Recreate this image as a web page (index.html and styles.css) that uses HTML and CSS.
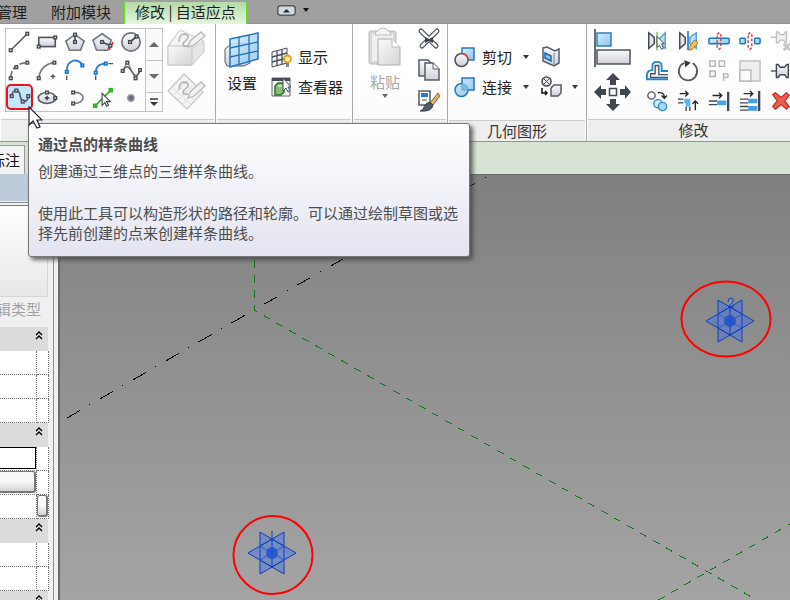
FILE: index.html
```html
<!DOCTYPE html>
<html lang="zh-CN">
<head>
<meta charset="utf-8">
<title>修改 | 自适应点</title>
<link rel="stylesheet" href="styles.css">
</head>
<body>
<svg class="defs" width="0" height="0" aria-hidden="true">
  <defs>
    <linearGradient id="steel" x1="0" y1="0" x2="0" y2="1"><stop offset="0" stop-color="#fafafc"/><stop offset="1" stop-color="#ced1d9"/></linearGradient>
    <linearGradient id="sky" x1="0" y1="0" x2="1" y2="1"><stop offset="0" stop-color="#d6edfb"/><stop offset="1" stop-color="#8cc6ec"/></linearGradient>
    <linearGradient id="pale" x1="0" y1="0" x2="1" y2="1"><stop offset="0" stop-color="#fbfbfb"/><stop offset="1" stop-color="#d4d4d4"/></linearGradient>
    <g id="n"><rect x="-1.5" y="-1.5" width="3" height="3" fill="#e8eaee" stroke="#444a54" stroke-width="1.5"/></g>
    <g id="nb"><rect x="-1.5" y="-1.5" width="3" height="3" fill="#8cc6f2" stroke="#1473c5" stroke-width="1.5"/></g>
    <g id="star">
      <path d="M-12-21L12-8V21L-12 8Z M12-21L-12-8V21L12 8Z M-24 0L0-14L24 0L0 14Z" fill="#3b6ef0" fill-opacity=".42" fill-rule="nonzero" stroke="none"/>
      <path d="M-12-21L12-7M12-21L-12-7M-12-21V21M12-21V21M-12 21L12 7M12 21L-12 7M-24 0L0-14L24 0L0 14Z" fill="none" stroke="#0b3fc0"/>
      <path d="M0-14V14" stroke="#0b3fc0"/>
      <path d="M-12-7L12 7M12-7L-12 7" stroke="#2a5cd4" stroke-opacity=".6" stroke-width="1.5"/>
      <circle r="6" fill="#1c50cf" fill-opacity=".8"/>
    </g>
    <g id="chev"><path d="M1 4L4 1L7 4M1 8L4 5L7 8" fill="none" stroke="#000" stroke-width="1.4"/></g>
  </defs>
</svg>
<div class="app">
  <nav class="tabs">
    <a class="tab" href="#">管理</a>
    <a class="tab" href="#">附加模块</a>
    <a class="tab active" href="#">修改 | 自适应点</a>
    <button class="collapse" aria-label="最小化"><svg width="19" height="11" viewBox="0 0 19 11"><rect x=".75" y=".75" width="17.500" height="9.500" rx="3" fill="#d6d8dd" stroke="#555a65" stroke-width="1.500"/><path d="M6 7.500L9.500 4L13 7.500Z" fill="#222833"/></svg></button>
    <button class="collapse" aria-label="更多"><svg width="8" height="5" viewBox="0 0 8 5"><path d="M1 0H7L4 4Z" fill="#111"/></svg></button>
  </nav>

  <div class="ribbon">
    <section class="panel draw">
      <div class="body">
        <div class="gallery">
          <div class="shapes">
            <button aria-label="直线"><svg viewBox="0 0 24 24"><path d="M3 21L21 3" stroke="#50555d" stroke-width="1.5"/><use href="#n" x="3" y="21"/><use href="#n" x="21" y="3"/></svg></button>
            <button aria-label="矩形"><svg viewBox="0 0 24 24"><rect x="3" y="7" width="18" height="10" fill="url(#steel)" stroke="#50555d" stroke-width="1.800"/><use href="#n" x="3" y="17"/><use href="#n" x="21" y="7"/></svg></button>
            <button aria-label="内接多边形"><svg viewBox="0 0 24 24"><path d="M12 4L22 11L18 21H6L2 11Z" fill="url(#steel)" stroke="#747982" stroke-width="1.800"/><path d="M12 4V12" stroke="#444a54" stroke-width="1.800"/><use href="#n" x="12" y="4"/><use href="#n" x="12" y="12"/></svg></button>
            <button aria-label="外接多边形"><svg viewBox="0 0 24 24"><path d="M11 3L21 10L17 21H5L1 10Z" fill="url(#steel)" stroke="#747982" stroke-width="1.800"/><path d="M23 12L18 22" stroke="#e22" stroke-width="1.800" stroke-dasharray="4 2"/><path d="M11 12L20 16" stroke="#444a54" stroke-width="1.800"/><use href="#n" x="11" y="12"/><use href="#n" x="20" y="16"/></svg></button>
            <button aria-label="圆形"><svg viewBox="0 0 24 24"><circle cx="12" cy="12" r="10" fill="url(#steel)" stroke="#6a6f78" stroke-width="1.800"/><path d="M11 12L18 6" stroke="#444a54" stroke-width="1.800"/><use href="#n" x="11" y="12"/><use href="#n" x="18" y="6"/></svg></button>
            <button aria-label="起点-终点-半径弧"><svg viewBox="0 0 24 24"><path d="M3 20Q4 5 21 4" fill="none" stroke="#747982" stroke-width="1.800" stroke-dasharray="7 2"/><use href="#n" x="3" y="21"/><use href="#n" x="9" y="9"/><use href="#n" x="21" y="4"/></svg></button>
            <button aria-label="圆心-端点弧"><svg viewBox="0 0 24 24"><path d="M3 21Q5 6 20 4" fill="none" stroke="#747982" stroke-width="1.800"/><use href="#n" x="3" y="21"/><use href="#n" x="20" y="4"/><path d="M16 19H21M18.500 16.500V21.500" stroke="#444a54" stroke-width="1.500"/></svg></button>
            <button aria-label="相切-端点弧"><svg viewBox="0 0 24 24"><path d="M3 23V18" stroke="#555" stroke-width="1.500"/><path d="M3 14C3-1 17-1 20 7" fill="none" stroke="#2c7fd0" stroke-width="2"/><use href="#nb" x="3" y="14"/><use href="#nb" x="20" y="7"/></svg></button>
            <button aria-label="圆角弧"><svg viewBox="0 0 24 24"><path d="M4 23V18M18 5H23" stroke="#555" stroke-width="1.500"/><path d="M4 15Q4 5 15 5" fill="none" stroke="#2c7fd0" stroke-width="2"/><use href="#nb" x="4" y="15"/><use href="#nb" x="15" y="5"/></svg></button>
            <button aria-label="样条曲线"><svg viewBox="0 0 24 24"><path d="M3 13L8 3L17 22L22 12" fill="none" stroke="#8b9098" stroke-width="1.500"/><path d="M3 13Q7 5 11 11T17 18Q20 18 22 12" fill="none" stroke="#555b66" stroke-width="1.500"/><use href="#n" x="3" y="13"/><use href="#n" x="8" y="4"/><use href="#n" x="17" y="21"/><use href="#n" x="22" y="12"/></svg></button>
            <button class="picked" aria-label="通过点的样条曲线"><svg viewBox="0 0 24 24"><path d="M3 11C4 3 11 3 12 10S19 20 21 12" fill="none" stroke="#555b66" stroke-width="1.800"/><use href="#n" x="3" y="11"/><use href="#n" x="8" y="5"/><use href="#n" x="15" y="17"/><use href="#n" x="21" y="11"/></svg></button>
            <button aria-label="椭圆"><svg viewBox="0 0 24 24"><ellipse cx="12" cy="12" rx="9.500" ry="6" fill="url(#steel)" stroke="#555b66" stroke-width="1.800"/><path d="M12 9.500V14.500M9.500 12H14.500" stroke="#333" stroke-width="1.500"/><use href="#n" x="12" y="6"/><use href="#n" x="21" y="12"/></svg></button>
            <button aria-label="半椭圆"><svg viewBox="0 0 24 24"><path d="M11 6C24 5 24 18 11 18" fill="none" stroke="#747982" stroke-width="1.800"/><use href="#n" x="10" y="6"/><use href="#n" x="10" y="18"/></svg></button>
            <button aria-label="拾取线"><svg viewBox="0 0 24 24"><path d="M3 21L20 4" stroke="#2eae20" stroke-width="1.800"/><rect x="1" y="18" width="5" height="5" fill="#2eb821"/><rect x="18" y="1" width="5" height="5" fill="#2eb821"/><path d="M11 7V20L14 17L16 21L18 20L16 16H20Z" fill="#fff" stroke="#3d434d" stroke-width="1.200"/></svg></button>
            <button aria-label="点图元"><svg viewBox="0 0 24 24"><circle cx="12" cy="12" r="3.500" fill="#686e79" stroke="#9ca1aa" stroke-width="1.500"/></svg></button>
          </div>
          <div class="scroller">
            <button aria-label="上一行"><svg width="10" height="6" viewBox="0 0 10 6"><path d="M0 5L5 0L10 5Z" fill="#686c73"/></svg></button>
            <button aria-label="下一行"><svg width="10" height="6" viewBox="0 0 10 6"><path d="M0 0H10L5 5Z" fill="#686c73"/></svg></button>
            <button class="short" aria-label="展开"><svg width="10" height="9" viewBox="0 0 10 9"><path d="M1 1H9" stroke="#333" stroke-width="1.500"/><path d="M1 4H9L5 8Z" fill="#333"/></svg></button>
          </div>
        </div>
        <div class="stack modes">
          <button aria-label="在面上绘制" disabled><svg width="40" height="40" viewBox="0 0 40 40"><path d="M1 18L13 2L37 14V24L25 37H1Z" fill="#e6e6e6" stroke="#c6c6c6"/><path d="M1 18L13 2L37 13L25 20Z" fill="#f4f4f4" stroke="#cecece"/><path d="M1 18H25V37H1Z" fill="url(#pale)" stroke="#c6c6c6"/><path d="M12 14Q12 6 18 6Q25 8 17 14Q14 19 21 18" fill="none" stroke="#b2b2b2" stroke-width="1.500"/><path d="M21 19L23 13L34 4L38 8L27 17Z" fill="#f1f1f1" stroke="#b9b9b9" stroke-width="1.300"/></svg></button>
          <button aria-label="在工作平面上绘制" disabled><svg width="40" height="40" viewBox="0 0 40 40"><path d="M1 19L17 2L36 20L20 37Z" fill="#f4f4f4" stroke="#c9c9c9" stroke-width="1.300"/><path d="M5 15L24 33M9 11L28 29M13 7L32 24M6 24L22 7M11 28L27 12M15 33L31 16" stroke="#dfdfdf"/><path d="M12 18Q12 10 18 10Q25 12 17 18Q14 23 21 22" fill="none" stroke="#b2b2b2" stroke-width="1.500"/><path d="M21 26L23 20L34 10L38 14L27 24Z" fill="#f1f1f1" stroke="#b9b9b9" stroke-width="1.300"/></svg></button>
        </div>
      </div>
      <div class="title"></div>
    </section>

    <section class="panel plane">
      <div class="body">
        <button class="big"><svg width="36" height="37" viewBox="0 0 36 37"><path d="M1 18L7 13L26 12V32L20 35H3L1 31Z" fill="url(#steel)" stroke="#555b66"/><path d="M6 8L34 2V28L6 36Z" fill="url(#sky)" fill-opacity=".85" stroke="#2672bb" stroke-width="1.500"/><path d="M15 6V33M25 4V31M6 17L34 11M6 26L34 20" stroke="#2672bb" stroke-width="1.300"/></svg><span>设置</span></button>
        <div class="stack">
          <button class="wide"><svg width="21" height="21" viewBox="0 0 21 21"><path d="M1 5L16 1V16L1 20Z" fill="#f2f3f5" stroke="#4a4f58"/><path d="M6 4V19M11 3V18M1 10L16 6M1 15L16 11" stroke="#4a4f58" stroke-width="1.300"/><circle cx="16.500" cy="12" r="3.500" fill="#fff6b2" stroke="#f29516" stroke-width="1.800"/><path d="M15 16H18V20H15Z" fill="#858a94"/></svg><span>显示</span></button>
          <button class="wide"><svg width="21" height="21" viewBox="0 0 21 21"><path d="M1 1H19V19H1Z" fill="#f3f4f7" stroke="#626873"/><path d="M1 1H19V4H1Z" fill="#454b56"/><path d="M4 9L7 6H13V15L10 18H4Z" fill="#8fb978" stroke="#27732a" stroke-width="1.500"/><path d="M7 9H13" stroke="#fff"/><path d="M12 1V14L15 11L17 15L19 14L17 10H20Z" fill="#fff" stroke="#444b57"/></svg><span>查看器</span></button>
        </div>
      </div>
      <div class="title"></div>
    </section>

    <section class="panel clipboard">
      <div class="body">
        <button class="big" disabled><svg width="36" height="40" viewBox="0 0 36 40"><rect x="2" y="4" width="27" height="33" rx="2" fill="#d9d9d9" stroke="#b9b9b9"/><rect x="5" y="7" width="21" height="27" fill="#f0f0f0"/><path d="M8 8Q8 4 11 4Q12 1 16 1T21 4Q24 4 24 8Z" fill="#f5f5f5" stroke="#bdbdbd"/><path d="M11 12H25L33 20V38H11Z" fill="url(#pale)" stroke="#adadad"/><path d="M25 12V20H33" fill="#fff" stroke="#bdbdbd"/></svg><span>粘贴</span><svg class="drop" width="6" height="4" viewBox="0 0 6 4"><path d="M0 0H6L3 4Z" fill="#666"/></svg></button>
        <div class="stack icons">
          <button aria-label="剪切"><svg viewBox="0 0 24 24"><path d="M4 4L19 19M20 4L5 19" stroke="#4d525b" stroke-width="5" stroke-linecap="round"/><path d="M4 4L19 19M20 4L5 19" stroke="#fff" stroke-width="2.500" stroke-linecap="round"/><path d="M8 10L12 12L16 10V16L12 14L8 16Z" fill="#3d424c"/></svg></button>
          <button aria-label="复制"><svg viewBox="0 0 24 24"><path d="M2 2H11L14 5V18H2Z" fill="url(#steel)" stroke="#555b66" stroke-width="1.500"/><path d="M8 5H16L22 11V22H8Z" fill="url(#steel)" stroke="#555b66" stroke-width="1.500"/><path d="M16 5V11H22" fill="#fff" stroke="#555b66"/></svg></button>
          <button aria-label="匹配类型"><svg viewBox="0 0 24 24"><rect x="2" y="2" width="11" height="14" fill="#fff" stroke="#555b66" stroke-width="1.500"/><rect x="4" y="4" width="7" height="4" fill="#267bc8"/><path d="M5 11H10" stroke="#555"/><path d="M13 14L21 4L23 7L16 16Z" fill="#e6b66b" stroke="#80603a"/><path d="M3 22Q7 21 8 16Q12 11 16 16Q15 23 3 22Z" fill="#555b66" stroke="#3d424c"/></svg></button>
        </div>
      </div>
      <div class="title"></div>
    </section>

    <section class="panel geometry">
      <div class="body">
        <div class="stack">
          <button class="wide"><svg width="22" height="22" viewBox="0 0 22 22"><rect x="8" y="2" width="12" height="12" fill="url(#sky)" stroke="#2d7ab9" stroke-width="1.500"/><circle cx="7.500" cy="14" r="6.500" fill="url(#steel)" stroke="#50555f" stroke-width="1.500"/><path d="M8 7.500Q14 8 14 14" fill="none" stroke="#f13b3b" stroke-width="1.500"/></svg><span>剪切</span><svg class="drop" width="6" height="4" viewBox="0 0 6 4"><path d="M0 0H6L3 4Z" fill="#333"/></svg></button>
          <button class="wide"><svg width="22" height="22" viewBox="0 0 22 22"><path d="M8 2H20V14H14A6.500 6.500 0 1 1 8 7.500Z" fill="url(#sky)" stroke="#2477bd" stroke-width="1.500"/><path d="M8 8Q14 8 14 14H8Z" fill="#84bce3" stroke="#5ca4d7"/></svg><span>连接</span><svg class="drop" width="6" height="4" viewBox="0 0 6 4"><path d="M0 0H6L3 4Z" fill="#333"/></svg></button>
        </div>
        <div class="stack">
          <button class="mini" aria-label="填色"><svg width="22" height="22" viewBox="0 0 22 22"><path d="M2 2L6 1L14 5L18 3V17L13 20L2 15Z" fill="url(#steel)" stroke="#555b66" stroke-width="1.500"/><path d="M13 7V20" fill="none" stroke="#7d828c"/><path d="M4 7L10 10V15L4 12Z" fill="#8bc2ef" stroke="#1869b5" stroke-width="1.500"/></svg></button>
          <button class="mini" aria-label="拆分面"><svg width="22" height="22" viewBox="0 0 22 22"><circle cx="5.500" cy="5.500" r="4.500" fill="#eee" stroke="#444a54" stroke-width="1.500"/><path d="M3 3L8 8M8 3L3 8" stroke="#444a54"/><path d="M1 12V17H6M4 15L6 17L4 19" fill="none" stroke="#111" stroke-width="1.500"/><path d="M10 12L13 9H20V17L17 20H10Z" fill="url(#steel)" stroke="#555b66" stroke-width="1.500"/></svg><svg class="drop" width="6" height="4" viewBox="0 0 6 4"><path d="M0 0H6L3 4Z" fill="#333"/></svg></button>
        </div>
      </div>
      <div class="title">几何图形</div>
    </section>

    <section class="panel modify">
      <div class="body">
        <div class="stack large">
          <button aria-label="对齐"><svg width="40" height="40" viewBox="0 0 40 40"><path d="M4 1V39" stroke="#343b47" stroke-width="1.500"/><rect x="6" y="5" width="14" height="13" fill="url(#sky)" stroke="#3280b7" stroke-width="1.500"/><rect x="6" y="22" width="33" height="14" fill="url(#steel)" stroke="#4d535e" stroke-width="1.500"/></svg></button>
          <button aria-label="移动"><svg width="40" height="40" viewBox="0 0 40 40"><path d="M22 1L29 8H25V13H19V8H15ZM22 39L29 32H25V27H19V32H15ZM3 20L10 13V17H15V23H10V27ZM40 20L34 13V17H29V23H34V27Z" fill="#414751"/><rect x="18.500" y="16.500" width="7" height="7" fill="#fff" stroke="#444a54" stroke-width="1.500"/></svg></button>
        </div>
        <div class="tools">
          <button aria-label="镜像-拾取轴"><svg viewBox="0 0 24 24"><path d="M3 3L9 8V15L3 20Z" fill="#e3e5e9" stroke="#444a54" stroke-width="1.600"/><path d="M21 3L15 9V15L21 20Z" fill="#b9dff8" stroke="#4ca1de" stroke-width="1.500"/><path d="M12 2V22" stroke="#79b95b" stroke-width="1.500"/><path d="M12 7V19L15 17L17 21L19 20L17 15H20Z" fill="#fff" stroke="#353b46"/></svg></button>
          <button aria-label="镜像-绘制轴"><svg viewBox="0 0 24 24"><path d="M3 3L9 8V15L3 20Z" fill="#e3e5e9" stroke="#444a54" stroke-width="1.600"/><path d="M21 3L14 8V15L21 20Z" fill="#b9dff8" stroke="#4ca1de" stroke-width="1.500"/><path d="M12 1V22" stroke="#1780ce" stroke-width="1.800"/><path d="M13 19L19 11L23 14L17 21L13 22Z" fill="#f5bd59" stroke="#b36b1f"/></svg></button>
          <button aria-label="拆分图元"><svg viewBox="0 0 24 24"><rect x="1" y="9" width="22" height="6" rx="1" fill="url(#sky)" stroke="#1977bd" stroke-width="1.600"/><path d="M10 5L12 3L14 5V19L12 21L10 19Z" fill="none" stroke="#d63636" stroke-width="1.500" stroke-dasharray="3 2"/></svg></button>
          <button aria-label="用间隙拆分"><svg viewBox="0 0 24 24"><rect x="1" y="9" width="6" height="6" rx="1" fill="url(#sky)" stroke="#1977bd" stroke-width="1.600"/><rect x="17" y="9" width="6" height="6" rx="1" fill="url(#sky)" stroke="#1977bd" stroke-width="1.600"/><path d="M10 5L12 3L14 5V19L12 21L10 19Z" fill="none" stroke="#d63636" stroke-width="1.500" stroke-dasharray="3 2"/></svg></button>
          <button aria-label="解锁" disabled><svg viewBox="0 0 24 24"><path d="M1 8H7" stroke="#bebebe" stroke-width="1.500"/><path d="M7 2H9L11 5H15L17 2H18V14H17L15 11H11L9 14H7Z" fill="#f2f2f2" stroke="#bebebe" stroke-width="1.500"/><path d="M15 15L22 22M22 15L15 22" stroke="#c2c2c2" stroke-width="3"/></svg></button>
          <button aria-label="偏移"><svg viewBox="0 0 24 24"><path d="M24 12H17V6Q17 2 12 2Q7 2 7 6V11Q1 11 1 17V21H24" fill="none" stroke="#2783d4" stroke-width="2"/><path d="M24 16H14V6H10V15H5V19H24" fill="#f3f4f5" stroke="#4d525c" stroke-width="1.500"/></svg></button>
          <button aria-label="旋转"><svg viewBox="0 0 24 24"><path d="M8 3A10 10 0 1 0 17 3.500" fill="none" stroke="#545963" stroke-width="2"/><path d="M8 0L15 3L9 8Z" fill="#343a44"/></svg></button>
          <button aria-label="阵列" disabled><svg viewBox="0 0 24 24"><path d="M2 1H8V7H2ZM12 1H18V7H12ZM2 12H8V18H2Z" fill="#f6f6f6" stroke="#b4b4b4" stroke-width="1.500"/><path d="M17 23V15H21Q23 17 21 19H17" fill="none" stroke="#bdbdbd" stroke-width="1.800"/></svg></button>
          <button aria-label="缩放" disabled><svg viewBox="0 0 24 24"><rect x="1" y="1" width="22" height="22" fill="#eee" stroke="#bdbdbd" stroke-width="1.500"/><rect x="1" y="11" width="12" height="12" fill="#fafafa" stroke="#b7b7b7" stroke-width="1.500"/></svg></button>
          <button aria-label="锁定"><svg viewBox="0 0 24 24"><path d="M1 12H7" stroke="#444a54" stroke-width="1.500"/><path d="M7 5H9L11 8H16L18 5H20V19H18L16 16H11L9 19H7Z" fill="url(#steel)" stroke="#444a54" stroke-width="1.600"/></svg></button>
          <button aria-label="复制图元"><svg viewBox="0 0 24 24"><circle cx="6" cy="6" r="4" fill="#fff" stroke="#555b66" stroke-width="1.500"/><path d="M13 3Q20 2 20 8M17 6L20 9L23 6" fill="none" stroke="#222" stroke-width="1.500"/><circle cx="13" cy="15" r="4.500" fill="#d1edff" stroke="#3587c3" stroke-width="1.500"/><circle cx="18" cy="18" r="4.500" fill="#aadbff" stroke="#3587c3" stroke-width="1.500"/></svg></button>
          <button aria-label="修剪为角"><svg viewBox="0 0 24 24"><path d="M3 4H12M9 1L12 4L9 7M20 22V12M17 15L20 12L23 15" fill="none" stroke="#222831" stroke-width="1.500"/><path d="M1 10H7M1 14H7M10 18V23M14 18V23" stroke="#444a54" stroke-width="1.500"/><path d="M8 12H12V18" fill="none" stroke="#5db4f0" stroke-width="5"/></svg></button>
          <button aria-label="修剪单个图元"><svg viewBox="0 0 24 24"><path d="M5 6H15M12 3L15 6L12 9" fill="none" stroke="#222831" stroke-width="1.500"/><path d="M22 2V23" stroke="#444a54" stroke-width="2.500"/><path d="M1 12H10M1 16H10" stroke="#444a54" stroke-width="1.500"/><path d="M10 14H20" stroke="#46a2e6" stroke-width="5"/></svg></button>
          <button aria-label="修剪多个图元"><svg viewBox="0 0 24 24"><path d="M5 4H15M12 1L15 4L12 7" fill="none" stroke="#222831" stroke-width="1.500"/><path d="M22 1V23" stroke="#444a54" stroke-width="2.500"/><path d="M1 10H10M1 14H10M1 18H10M1 22H10" stroke="#444a54" stroke-width="1.500"/><path d="M10 12H20M10 20H20" stroke="#46a2e6" stroke-width="5"/></svg></button>
          <button aria-label="删除"><svg viewBox="0 0 24 24"><path d="M3 5L6 3L12 8L18 3L21 6L16 12L21 18L18 21L12 16L6 21L3 18L8 12Z" fill="#f05b50" stroke="#bd2824" stroke-width="1.300"/></svg></button>
        </div>
      </div>
      <div class="title">修改</div>
    </section>
  </div>

  <div class="options"><button class="dimension"><span>标注</span></button></div>

  <main class="workspace">
    <aside class="side">
      <div class="caption"></div>
      <div class="palette">
        <div class="preview"></div>
        <div class="edit"><button disabled>辑类型</button></div>
        <button class="group" aria-label="折叠第一组"><svg width="8" height="9" viewBox="0 0 8 9"><use href="#chev"/></svg></button>
        <table><tbody><tr><td></td><td></td></tr><tr><td></td><td></td></tr><tr><td></td><td></td></tr></tbody></table>
        <button class="group" aria-label="折叠第二组"><svg width="8" height="9" viewBox="0 0 8 9"><use href="#chev"/></svg></button>
        <table><tbody><tr><td><input class="value" aria-label="参数值"></td><td></td></tr><tr><td><button class="pick" aria-label="选择"></button></td><td></td></tr><tr><td></td><td><button class="link" aria-label="关联参数"></button></td></tr></tbody></table>
        <button class="group" aria-label="折叠第三组"><svg width="8" height="9" viewBox="0 0 8 9"><use href="#chev"/></svg></button>
        <table><tbody><tr><td></td><td></td></tr><tr><td></td><td></td></tr></tbody></table>
        <button class="group" aria-label="折叠第四组"><svg width="8" height="9" viewBox="0 0 8 9"><use href="#chev"/></svg></button>
      </div>
    </aside>
    <div class="view">
      <svg viewBox="0 0 730 425" preserveAspectRatio="xMinYMin slice" role="img" aria-label="三维视图">
        <path d="M7 243L194 135L426 2" stroke="#000" stroke-dasharray="15 11 1 11" fill="none" shape-rendering="crispEdges"/>
        <g stroke="#067d13" fill="none" shape-rendering="crispEdges">
          <path d="M194 60V135" stroke-dasharray="8 7" stroke-dashoffset="-10"/>
          <path d="M194 135L700 427" stroke-dasharray="7 8" stroke-dashoffset="4"/>
          <path d="M595 427L730 349" stroke-dasharray="7 8" stroke-dashoffset="-4"/>
        </g>
        <use href="#star" x="670" y="146"/>
        <path d="M668 127Q668 123 671 123T673 127L668 132H674" fill="none" stroke="#0b3fc0"/>
        <use href="#star" x="212" y="378"/>
        <path d="M212 356V366" stroke="#0b3fc0"/>
        <ellipse cx="666" cy="144" rx="44.500" ry="37.500" fill="none" stroke="#f00" stroke-width="2"/>
        <ellipse cx="213" cy="380" rx="39.500" ry="39" fill="none" stroke="#f00" stroke-width="2"/>
      </svg>
    </div>
  </main>

  <div class="tooltip" role="tooltip">
    <strong>通过点的样条曲线</strong>
    <p>创建通过三维点的三维样条曲线。</p>
    <p class="more">使用此工具可以构造形状的路径和轮廓。可以通过绘制草图或选择先前创建的点来创建样条曲线。</p>
  </div>
  <svg class="pointer" width="15" height="24" viewBox="0 0 15 24" aria-hidden="true"><path d="M1 1V19L5 15L9 22L12 21L9 14H14Z" fill="#fff" stroke="#1c2033" stroke-width="1.200"/></svg>
</div>
</body>
</html>
```
FILE: styles.css
```css
* { box-sizing: border-box; }

body {
  margin: 0;
  font: 15px/20px "Noto Sans CJK SC", sans-serif;
  color: #333;
}

button {
  padding: 0;
  border: 0;
  background: none;
  font: inherit;
  color: inherit;
}

svg { display: block; flex: none; }
.defs { position: absolute; }

.app {
  position: relative;
  display: flex;
  flex-direction: column;
  height: 100vh;
  overflow: hidden;
}

/* Tab strip */
.tabs {
  display: flex;
  align-items: center;
  height: 24px;
  flex: none;
  margin-left: -3px;
  background: #a0a0a0;
  border-bottom: 1px solid #5cc71a;
}
.tab {
  margin-right: 24px;
  color: #1c1c1c;
  text-decoration: none;
  white-space: nowrap;
}
.tab.active {
  height: 23px;
  margin: 1px 30px 0 -11px;
  padding: 0 10px;
  border: 1px solid #5fe01a;
  border-bottom: 0;
  background: linear-gradient(#b4d9a8, #e4f6dd);
}
.collapse { margin: 0 6px 2px 0; }

/* Ribbon */
.ribbon {
  display: flex;
  flex: none;
  height: 118px;
  overflow: hidden;
  background: #fff;
  border-bottom: 1px solid #5cc71a;
}
.panel {
  display: flex;
  flex-direction: column;
  flex: none;
  border-right: 1px solid #a5aaa3;
}
.body {
  display: flex;
  flex: 1;
  background: linear-gradient(#fff 50%, #fbfbfb);
}
.title {
  height: 22px;
  margin: 0 1px;
  background: #eee;
  border-top: 1px solid #ccc;
  text-align: center;
}
.stack {
  display: flex;
  flex-direction: column;
  align-items: flex-start;
}
.draw { width: 216px; }
.draw .body { padding: 4px 5px; gap: 4px; }
.plane { width: 137px; }
.plane .body { padding: 7px 8px; gap: 11px; }
.clipboard { width: 95px; }
.clipboard .body { padding: 3px 8px 0 14px; gap: 14px; }
.geometry { width: 139px; }
.geometry .body { padding: 22px 6px; gap: 12px; }
.modify { flex: 1 0 214px; }
.modify .body { padding: 2px 4px; gap: 10px; }

.gallery {
  display: flex;
  align-self: flex-start;
  height: 84px;
  width: 158px;
  outline: 1px solid #c4c4c4;
  outline-offset: -1px;
}
.shapes { display: grid; grid-template-columns: repeat(5, 28px); }
.shapes button { display: grid; place-items: center; height: 28px; }
.shapes svg, .tools svg { width: 22px; height: 22px; }
.shapes .picked {
  margin-left: 1px;
  height: 26px;
  border: 2px solid #e8121c;
  border-radius: 5px;
  background: #c3e6fa;
}
.scroller {
  display: flex;
  flex-direction: column;
  flex: 1;
  border: 1px solid #c4c4c4;
}
.scroller button {
  display: grid;
  place-items: center;
  flex: 1;
  background: #fafafa;
  border-bottom: 1px solid #c4c4c4;
}
.scroller .short { flex: none; height: 18px; border-bottom: 0; }
.modes { gap: 4px; }

.big {
  display: flex;
  flex-direction: column;
  align-items: center;
  align-self: flex-start;
  gap: 5px;
  color: #222;
}
.big:disabled { color: #a7a7a7; }
.big .drop { margin-top: -3px; }
.plane .stack { padding-top: 15px; gap: 8px; }
.wide {
  display: flex;
  align-items: center;
  gap: 6px;
  height: 22px;
  color: #222;
  white-space: nowrap;
}
.geometry .stack { gap: 8px; }
.wide .drop { margin-left: 5px; }
.mini { display: flex; align-items: center; gap: 9px; height: 22px; }
.icons { gap: 7px; }
.icons button, .tools button { display: grid; place-items: center; }
.clipboard .icons svg { width: 24px; height: 24px; }
.large { padding-top: 2px; gap: 4px; }
.tools { display: grid; grid-template: repeat(3, 30px) / repeat(5, 31px); }

/* Options strip */
.options {
  flex: none;
  height: 32px;
  padding-top: 3px;
  background: #d8e4d3;
}
.dimension {
  display: flex;
  justify-content: flex-end;
  align-items: center;
  width: 25px;
  height: 29px;
  padding-right: 4px;
  overflow: hidden;
  color: #111;
  white-space: nowrap;
  background: #f4f4f4;
  border: solid #999;
  border-width: 1px 1px 0 0;
}

/* Workspace */
.workspace { display: flex; flex: 1; min-height: 0; }
.side {
  width: 60px;
  flex: none;
  overflow: hidden;
  background: #f0f0f0;
  border-right: 2px solid #6b6b6b;
}
.caption {
  height: 32px;
  background: linear-gradient(#becbda 27px, #f2f2f2 27px 28px, #888 28px 29px, #f4f4f4 29px 31px, #777 31px);
}
.palette {
  width: 54px;
  padding-right: 5px;
  border-right: 1px solid #8c8c8c;
}
.preview {
  height: 91px;
  background: linear-gradient(#fff, #e8e8e8);
  border: solid #d5d5d5;
  border-width: 0 1px 1px 0;
}
.edit { height: 30px; }
.edit button {
  margin-left: -4px;
  line-height: 24px;
  color: #a1a1a1;
  white-space: nowrap;
}
.group {
  display: flex;
  justify-content: flex-end;
  width: 100%;
  height: 24px;
  padding: 4px 5px;
  background: #dcdcdc;
}
table {
  width: 49px;
  table-layout: fixed;
  border-spacing: 0;
  background: #fff;
}
td {
  height: 24px;
  padding: 0;
  border: dotted #777;
  border-width: 0 1px 1px 0;
  vertical-align: top;
}
td:first-child { width: 37px; }
.value, .pick, .link { display: block; width: 100%; height: 22px; }
.value {
  padding: 0;
  border: 1px solid #000;
  border-left: 0;
  background: #fff;
}
.pick, .link {
  border: solid #777;
  border-width: 1px 2px 2px 1px;
  border-radius: 3px;
  background: linear-gradient(#f8f8f8 50%, #d3d3d3);
}
.pick { border-left: 0; border-radius: 0 3px 3px 0; }
.view {
  flex: 1;
  min-width: 0;
  border-top: 1px solid #686868;
  background: linear-gradient(#808080, #a4a4a4);
}
.view svg { width: 100%; height: 100%; }

/* Overlays */
.tooltip {
  position: absolute;
  left: 28px;
  top: 123px;
  width: 442px;
  padding: 10px 9px 13px;
  color: #4c4c4c;
  border: 1px solid #777;
  border-radius: 3px;
  background: linear-gradient(#fff, #e3e4f0);
  box-shadow: 3px 3px 4px #444c;
}
.tooltip strong { display: block; }
.tooltip p { margin: 7px 0 0; }
.tooltip .more { margin-top: 22px; }
.pointer { position: absolute; left: 28px; top: 106px; }
```
